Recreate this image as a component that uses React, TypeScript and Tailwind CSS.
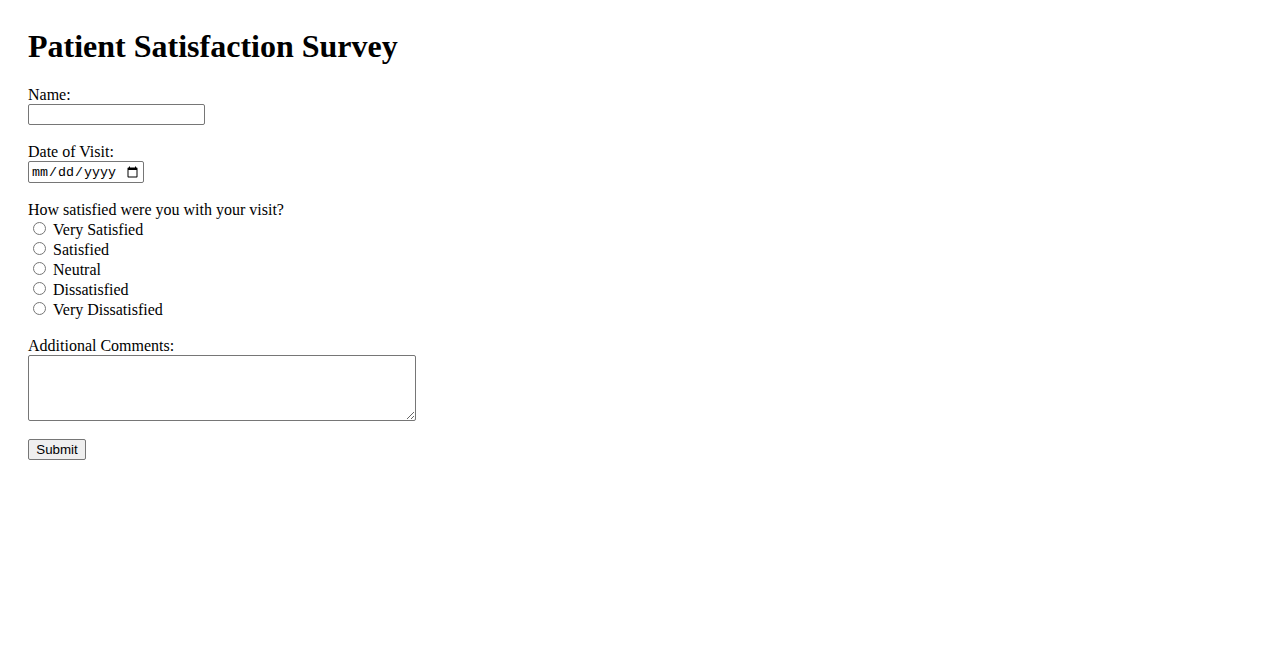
import React from "react";

export default function App() {
  const options = ["Very Satisfied", "Satisfied", "Neutral", "Dissatisfied", "Very Dissatisfied"];
  return (
    <div className="min-h-[650px] bg-white text-black px-[28px] pt-[28px]" style={{ fontFamily: '"Liberation Serif", "Times New Roman", serif' }}>
      <h1 className="text-[32px] font-bold h-[37px] leading-[37px] mb-[21px]">Patient Satisfaction Survey</h1>
      <form onSubmit={(e) => e.preventDefault()}>
        <div className="mb-[18px]">
          <label className="block text-[16px] h-[18px] leading-[18px]">Name:</label>
          <input
            type="text"
            className="block w-[177px] h-[21px] border border-[#767676] rounded-[2px] bg-white px-[2px] text-[13.333px] outline-none"
            style={{ fontFamily: '"Liberation Sans", Arial, sans-serif' }}
          />
        </div>
        <div className="mb-[18px]">
          <label className="block text-[16px] h-[18px] leading-[18px]">Date of Visit:</label>
          <input
            type="date"
            className="block w-[116px] h-[22px] border border-[#767676] rounded-[2px] bg-white px-[2px] pt-[2px] text-[13.333px] outline-none"
            style={{ fontFamily: '"Liberation Mono", "Courier New", monospace' }}
          />
        </div>
        <div className="mb-[18px]">
          <div className="text-[16px] h-[18px] leading-[18px]">How satisfied were you with your visit?</div>
          {options.map((o) => (
            <label key={o} className="flex items-start h-[20px] text-[16px] leading-[20px]">
              <input type="radio" name="satisfaction" className="w-[13px] h-[13px] ml-[5px] mr-[7px] mt-[3px]" />
              <span className="pt-[1px]">{o}</span>
            </label>
          ))}
        </div>
        <div className="mb-[18px]">
          <label className="block text-[16px] h-[18px] leading-[18px]">Additional Comments:</label>
          <textarea
            className="block w-[388px] h-[66px] border border-[#767676] rounded-[2px] bg-white p-[2px] text-[13.333px] outline-none"
            style={{ fontFamily: '"Liberation Mono", monospace' }}
          />
        </div>
        <button
          type="submit"
          className="block h-[21px] w-[58px] border border-[#767676] rounded-[2px] bg-[#efefef] text-[13.333px] leading-[19px] text-black"
          style={{ fontFamily: '"Liberation Sans", Arial, sans-serif' }}
        >
          Submit
        </button>
      </form>
    </div>
  );
}
